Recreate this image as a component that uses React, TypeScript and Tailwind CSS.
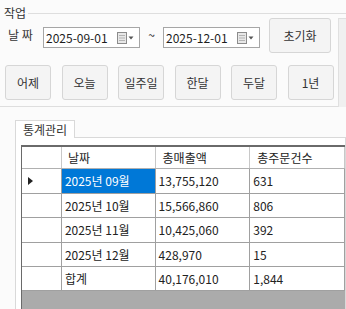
import React from "react";

const font = { fontFamily: '"Noto Sans CJK KR", "Noto Sans", sans-serif' };

function DateBox({ value }: { value: string }) {
  return (
    <div className="flex h-[21px] w-[97px] items-center border border-[#a6a6a6] bg-white pl-[2px]">
      <span className="text-[12px] leading-none text-[#1e1e1e]">{value}</span>
      <svg width="18" height="12" viewBox="0 0 18 12" className="ml-auto mr-[4px]">
        <rect x="0.5" y="0.5" width="9" height="11" fill="#e8e8e8" stroke="#8c8c8c" />
        <path d="M2 3.5h6M2 6h6M2 8.5h6" stroke="#b4b4b4" />
        <path d="M11.5 4.5h5l-2.5 3z" fill="#555" />
      </svg>
    </div>
  );
}

function Btn({ label, className = "" }: { label: string; className?: string }) {
  return (
    <div
      className={`flex h-[35px] w-[46px] items-center justify-center rounded-[3px] border border-[#d6d6d6] bg-[#f4f4f4] text-[12px] text-[#333] ${className}`}
    >
      {label}
    </div>
  );
}

const rows = [
  { date: "2025년 09월", sales: "13,755,120", orders: "631", h: "h-[25px]", sel: true },
  { date: "2025년 10월", sales: "15,566,860", orders: "806", h: "h-[24px]", sel: false },
  { date: "2025년 11월", sales: "10,425,060", orders: "392", h: "h-[25px]", sel: false },
  { date: "2025년 12월", sales: "428,970", orders: "15", h: "h-[24px]", sel: false },
  { date: "합계", sales: "40,176,010", orders: "1,844", h: "h-[24px]", sel: false },
];

export default function App() {
  return (
    <div className="relative h-[309px] w-[346px] overflow-hidden bg-[#fbfbfb] text-[#222]" style={font}>
      {/* 작업 그룹 */}
      <div className="relative h-[107px] border-b border-[#dedede]">
        <div className="absolute left-0 right-0 top-[6px] flex items-center">
          <span className="pl-[4px] pr-[2px] text-[12px] leading-[14px] text-[#333]">작업</span>
          <div className="mt-[1px] h-px flex-1 bg-[#dedede]" />
        </div>
        <div className="flex pt-[18px]">
          <div className="w-[338px]">
            <div className="flex h-[35px] items-start">
              <span className="ml-[8px] mt-[10px] w-[35px] text-[12px] leading-[14px] text-[#333]">날 짜</span>
              <div className="mt-[9px]">
                <DateBox value="2025-09-01" />
              </div>
              <span className="mt-[10px] w-[23px] text-center text-[12px] leading-[14px]">~</span>
              <div className="mt-[9px]">
                <DateBox value="2025-12-01" />
              </div>
              <Btn label="초기화" className="ml-[9px] w-[62px]" />
            </div>
            <div className="mt-[12px] flex gap-[10.5px] pl-[5px]">
              <Btn label="어제" />
              <Btn label="오늘" />
              <Btn label="일주일" />
              <Btn label="한달" />
              <Btn label="두달" />
              <Btn label="1년" />
            </div>
          </div>
          <div className="h-[89px] flex-1 border-l border-t border-[#e0e0e0] bg-[#f0f0f0]" />
        </div>
      </div>

      {/* 통계관리 탭 */}
      <div className="mt-[13px] pl-[15px]">
        <div className="relative z-10 -mb-px flex h-[18px] w-[60px] items-center justify-center border border-b-0 border-[#d9d9d9] bg-white text-[12px] leading-none text-[#333]">
          통계관리
        </div>
        <div className="h-[200px] border border-[#d9d9d9] bg-white pl-[5px] pt-[7px]">
          <div className="h-[200px] border-l border-t-2 border-[#6a6a6a] bg-[#ababab] text-[12px] leading-none">
            <div className="flex h-[22px] border-b border-[#b0b0b0] bg-white">
              <div className="w-[40px] border-r border-[#c8c8c8]" />
              <div className="flex w-[94px] items-center border-r border-[#c8c8c8] pl-[6px]">날짜</div>
              <div className="flex w-[95px] items-center border-r border-[#c8c8c8] pl-[7px]">총매출액</div>
              <div className="flex w-[95px] items-center border-r border-[#c8c8c8] pl-[7px]">총주문건수</div>
            </div>
            {rows.map((r) => (
              <div key={r.date} className={`flex ${r.h} border-b border-[#a0a0a0] bg-white`}>
                <div className="flex w-[40px] items-center border-r border-[#a0a0a0] pl-[6px]">
                  {r.sel && (
                    <svg width="6" height="8" viewBox="0 0 6 8">
                      <path d="M0 0l5 4-5 4z" fill="#222" />
                    </svg>
                  )}
                </div>
                <div
                  className={`flex w-[94px] items-center border-r border-[#a0a0a0] pl-[3px] ${
                    r.sel ? "bg-[#0078d7] text-white" : ""
                  }`}
                >
                  {r.date}
                </div>
                <div className="flex w-[95px] items-center border-r border-[#a0a0a0] pl-[3px]">{r.sales}</div>
                <div className="flex w-[95px] items-center border-r border-[#a0a0a0] pl-[3px]">{r.orders}</div>
              </div>
            ))}
          </div>
        </div>
      </div>
    </div>
  );
}
